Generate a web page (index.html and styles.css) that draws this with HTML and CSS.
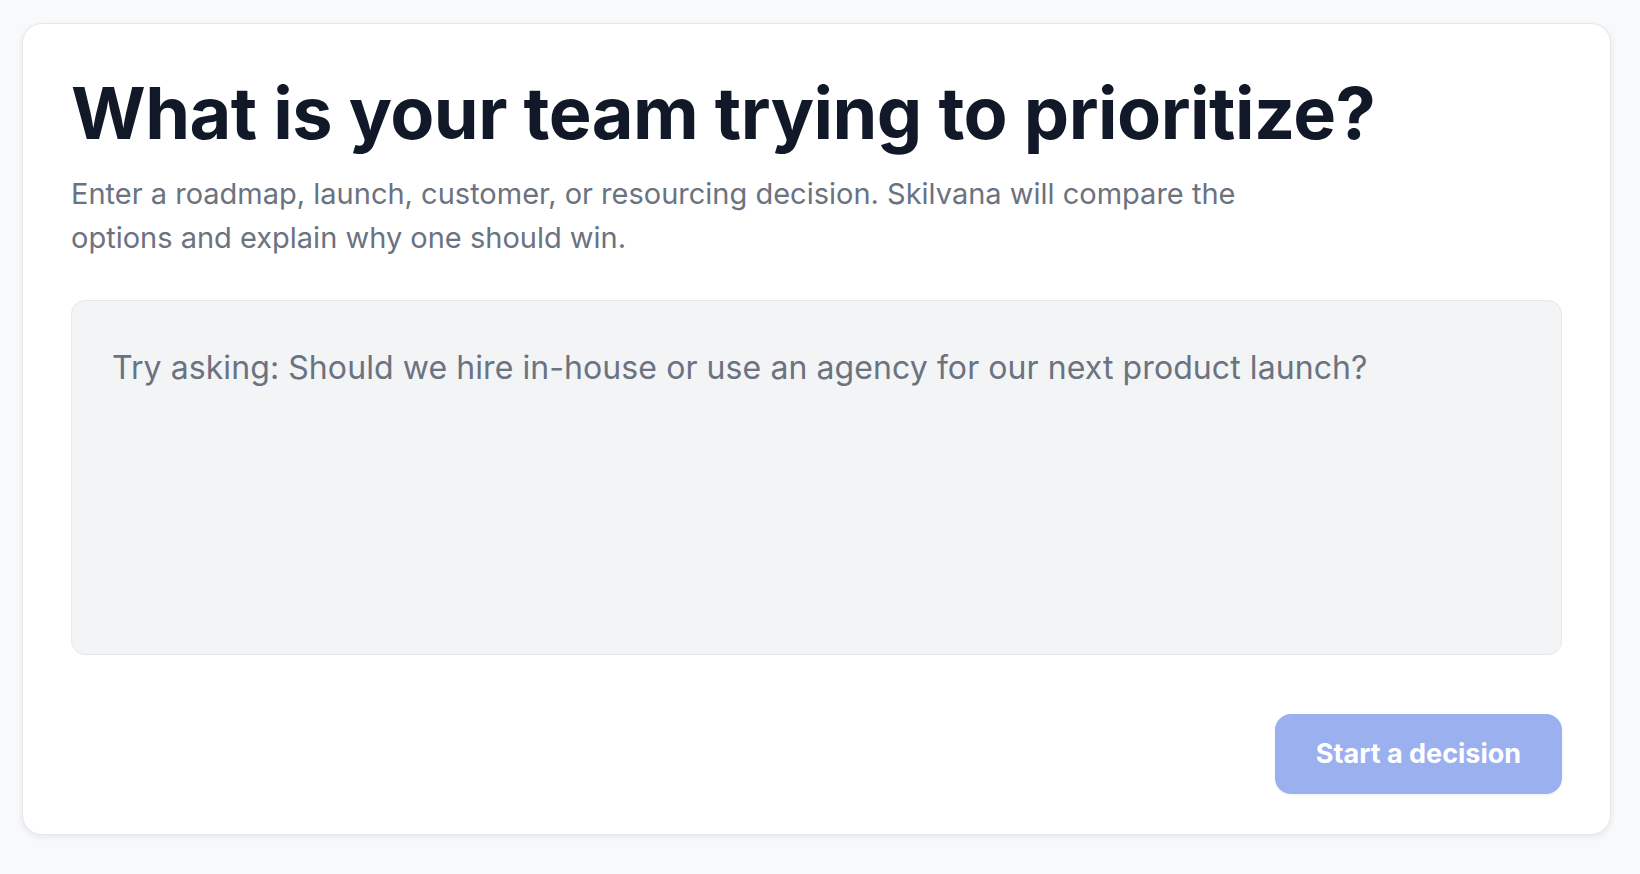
FILE: index.html
```html
<!DOCTYPE html>
<html lang="en">
<head>
    <meta charset="UTF-8">
    <meta name="viewport" content="width=device-width, initial-scale=1.0">
    <title>Skilvana</title>
    <link rel="stylesheet" href="styles.css">
</head>
<body>
    <div class="card">
        <h1 class="title">What is your team trying to prioritize?</h1>
        <p class="lead">Enter a roadmap, launch, customer, or resourcing decision. Skilvana will compare the options and explain why one should win.</p>

        <textarea class="prompt" placeholder="Try asking: Should we hire in-house or use an agency for our next product launch?"></textarea>

        <div class="actions">
            <button class="button" disabled>Start a decision</button>
        </div>
    </div>
</body>
</html>
```

FILE: styles.css
```css
body {
    font-family: Inter, "Noto Sans", sans-serif;
    background-color: #f8f9fb;
    margin: 0;
    padding: 23px 29px 20px 22px;
}
.card {
    background-color: #fff;
    border: 1px solid #e6e7eb;
    border-radius: 20px;
    box-shadow: 0 2px 6px rgba(17, 24, 39, 0.08);
    padding: 48px 48px 40px;
}
.title {
    margin: 0;
    font-size: 72px;
    font-weight: 700;
    line-height: 1.15;
    letter-spacing: -0.5px;
    color: #111827;
}
.lead {
    margin: 17px 0 0;
    max-width: 1180px;
    font-size: 29px;
    line-height: 44px;
    color: #6b7280;
}
.prompt {
    display: block;
    box-sizing: border-box;
    width: 100%;
    height: 355px;
    margin-top: 40px;
    padding: 45px 40px 40px;
    font-family: inherit;
    font-size: 32px;
    line-height: 1.4;
    letter-spacing: 0.08px;
    color: #111827;
    background-color: #f3f4f6;
    border: 1px solid #e5e7eb;
    border-radius: 14px;
    resize: none;
    outline: none;
}
.prompt::placeholder {
    color: #6b7280;
}
.actions {
    display: flex;
    justify-content: flex-end;
    margin-top: 59px;
}
.button {
    width: 287px;
    height: 80px;
    font-family: inherit;
    font-size: 27px;
    font-weight: 700;
    color: #fff;
    background-color: #9bb0ef;
    border: none;
    border-radius: 16px;
    box-shadow: 0 1px 3px rgba(17, 24, 39, 0.06);
    cursor: pointer;
}
```
